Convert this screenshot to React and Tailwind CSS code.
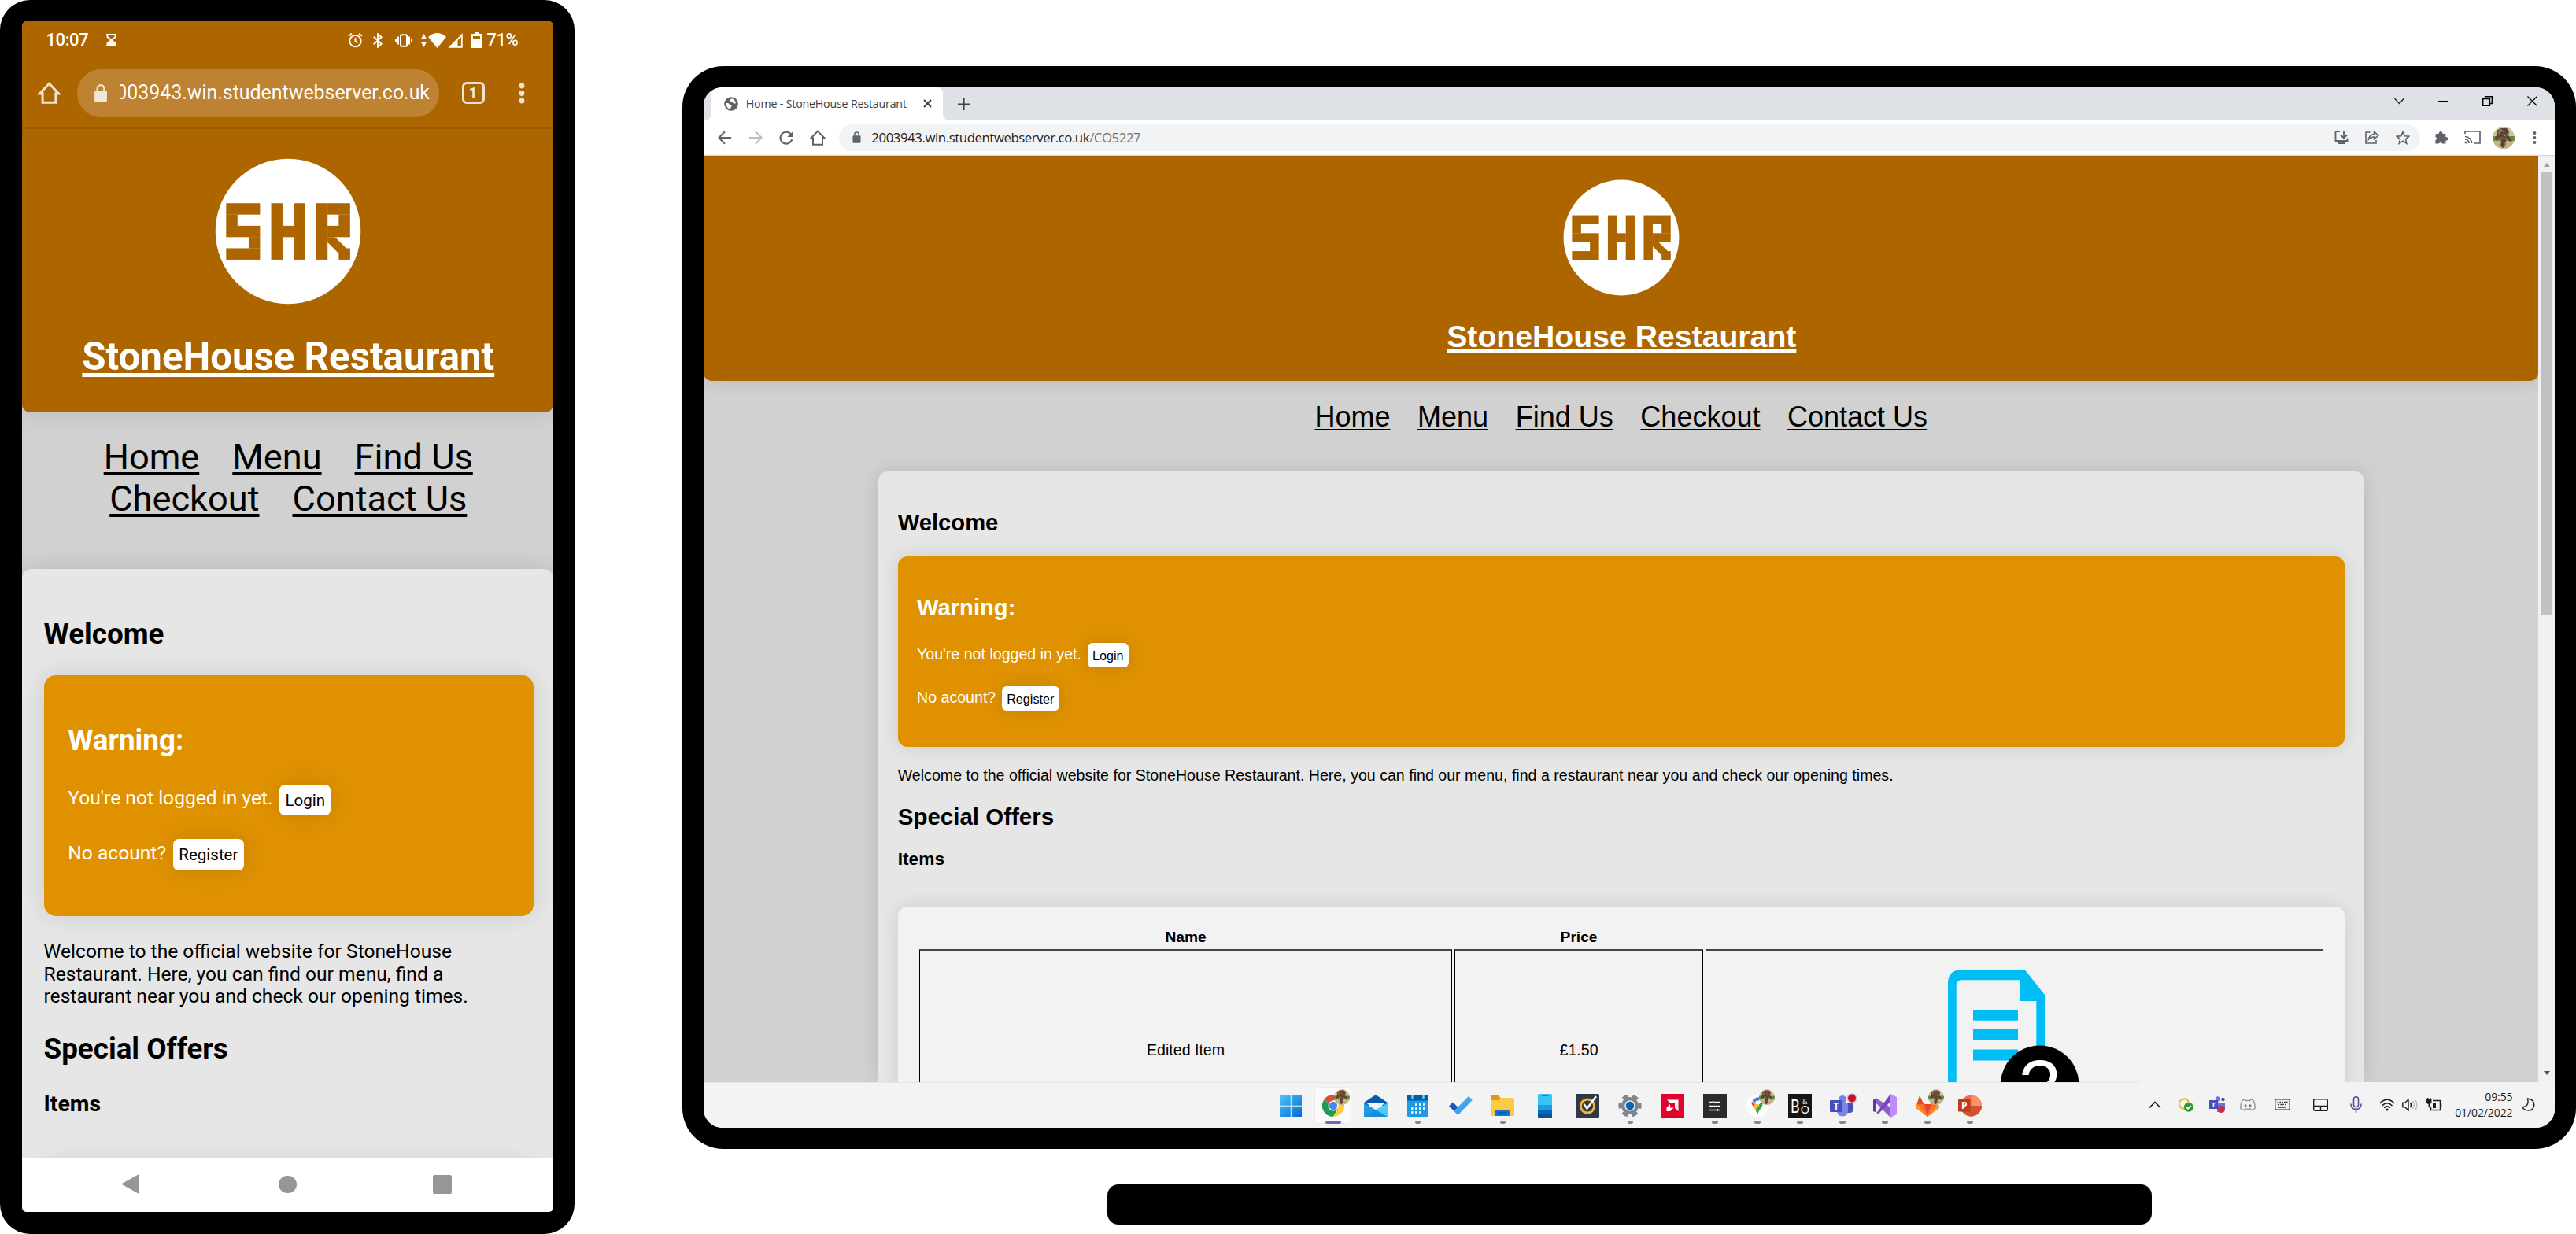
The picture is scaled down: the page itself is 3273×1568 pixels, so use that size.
import React from "react";

const BRAND = "#ad6500";

/* Block logo: a 13-unit circle with letters on a 5-unit high grid */
function Logo({ className }) {
  const blocks = [
    [0, 0, 3, 1], [0, 1, 1, 1], [0, 2, 3, 1], [2, 3, 1, 1], [0, 4, 3, 1],
    [4, 0, 1, 5], [6, 0, 1, 5], [5, 2, 1, 1],
    [8, 0, 1, 5], [9, 0, 2, 1], [10, 1, 1, 1], [9, 2, 2, 1], [10, 4, 1, 1],
  ];
  return (
    <svg className={className} viewBox="-1 -4 13 13" role="img" aria-label="SHR">
      <circle cx="5.5" cy="2.5" r="6.45" fill="#fff" />
      <clipPath id="leg"><rect x="9" y="3" width="2" height="2" /></clipPath>
      <g fill={BRAND} shapeRendering="geometricPrecision">
        {blocks.map(([x, y, w, h], i) => (
          <rect key={i} x={x} y={y} width={w + 0.01} height={h + 0.01} />
        ))}
        <line x1="9" y1="2.9" x2="10.9" y2="4.8" stroke={BRAND} strokeWidth="0.8" clipPath="url(#leg)" />
      </g>
    </svg>
  );
}

function Avatar({ className }) {
  return (
    <svg className={className} viewBox="0 0 28 28">
      <clipPath id="av"><circle cx="14" cy="14" r="14" /></clipPath>
      <g clipPath="url(#av)">
        <rect width="28" height="28" fill="#cfc295" />
        <rect y="12" width="28" height="7" fill="#5f8a3f" />
        <rect y="18" width="28" height="10" fill="#c6b184" />
        <path d="M5 5l6-3 7 0 3 4-1 5 5 7-3 1-4-5-1 4-1 6-3 3-3-3 1-6-2-4-5 3-1-3 3-4z" fill="#5a4438" />
        <path d="M7 8l3 3M12 5l3 2M18 9l2 3M11 13l2 3M15 20l1 3" stroke="#a8603c" strokeWidth="1.6" />
        <path d="M14 9l2 3M10 4l2 1M16 15l2 1M8 6l1 2" stroke="#a79c92" strokeWidth="1.4" />
      </g>
    </svg>
  );
}

function Svg({ className, vb = "0 0 20 20", children, ...p }) {
  return <svg className={"shrink-0 " + className} viewBox={vb} fill="none" {...p}>{children}</svg>;
}

const HomeIcon = ({ className, color, sw = 2 }) => (
  <Svg className={className} vb="0 0 20 20" stroke={color} strokeWidth={sw}>
    <path d="M4 18.8V10.6H1.4L10 1.6l8.6 9H16v8.2z" />
  </Svg>
);

const Lock = ({ className, color }) => (
  <Svg className={className} vb="0 0 12 16">
    <rect x="0.5" y="5.5" width="11" height="10.5" rx="1.4" fill={color} />
    <path d="M3 6V3.8a3 3 0 0 1 6 0V6" stroke={color} strokeWidth="1.6" />
  </Svg>
);

/* ---------------------------------------------------------------- phone */

function Phone() {
  return (
    <div className="h-[1568px] w-[730px] shrink-0 rounded-[38px] bg-black pl-[27.5px] pt-[27px] font-['Roboto',sans-serif]">
      <div className="flex h-[1513px] w-[675.5px] flex-col overflow-hidden rounded-[6px] bg-[#d1d1d1]">
        <div className="relative z-10 shrink-0 rounded-b-[10px] bg-[#ad6500] shadow-[0_0_30px_rgba(0,0,0,0.12)]">
          <div className="flex h-12 items-center text-[22px] font-medium leading-[26px] text-white">
            <span className="ml-[31px] w-[54px] whitespace-nowrap tracking-[-0.4px]">10:07</span>
            <Svg className="ml-[21px] h-4 w-[15px]" vb="0 0 15 16">
              <path d="M1 1h13M1 15h13M2.5 1.5v2.8L7.5 8l5-3.7V1.5M2.5 15v-3L7.5 8l5 4v3" stroke="#fff" strokeWidth="1.8" />
              <path d="M7.5 8l5 4v3h-10v-3z" fill="#fff" />
            </Svg>
            <Svg className="ml-[293px] h-5 w-[19px]" stroke="#fff" strokeWidth="2">
              <circle cx="10" cy="11.2" r="7.6" /><path d="M10 7v4.6l3 2M1 4.6L5 1.2M19 4.6l-4-3.4" />
            </Svg>
            <Svg className="ml-[12px] h-[19px] w-[14px]" vb="0 0 14 20" stroke="#fff" strokeWidth="1.9">
              <path d="M1.5 5l10.5 9.5-5 4.3V1.2l5 4.3L1.5 15" />
            </Svg>
            <Svg className="ml-[15px] h-[17px] w-[22px]" vb="0 0 22 17" stroke="#fff" strokeWidth="2">
              <rect x="7" y="1.3" width="8" height="14.4" rx="1" /><path d="M4 3.5v10M18 3.5v10M1 6v5M21 6v5" />
            </Svg>
            <Svg className="ml-[11px] h-[17px] w-[7px]" vb="0 0 7 17"><path d="M3.5 0L7 6.5H0zM3.5 17L7 10.5H0z" fill="#fff" /></Svg>
            <Svg className="ml-[2px] h-[19px] w-[23px]" vb="0 0 23 19"><path d="M0 5Q11.500 -5 23 5L11.500 19z" fill="#fff" /></Svg>
            <Svg className="ml-[2px] h-[19px] w-[19px]" vb="0 0 19 19">
              <path d="M17.800 2.500V17.800H2.500z" stroke="#fff" strokeWidth="1.8" /><path d="M12.500 7V18H1.500z" fill="#fff" />
            </Svg>
            <Svg className="ml-[11px] h-5 w-[13px]" vb="0 0 13 20">
              <path d="M4 0h5v2h4v18H0V2h4z" fill="#fff" /><path d="M2 5h9v3H2z" fill={BRAND} />
            </Svg>
            <span className="ml-[7px] whitespace-nowrap tracking-[-0.5px]">71%</span>
          </div>
          <div className="flex h-[88.500px] items-center border-b-2 border-[#9a5a00]">
            <HomeIcon className="ml-[20px] h-[28px] w-[29px] overflow-visible" color="#efe3d3" sw={2.2} />
            <div className="ml-[21.500px] flex h-[61.500px] w-[460px] items-center rounded-full bg-[#be8233]">
              <Lock className="ml-[21px] h-[23px] w-[18px]" color="#efe6dc" />
              <div className="ml-[16px] flex w-[393px] justify-end overflow-hidden whitespace-nowrap text-[24.900px] leading-[30px] text-white">
                2003943.win.studentwebserver.co.uk
              </div>
            </div>
            <div className="ml-[28.500px] flex h-[28px] w-[29px] items-center justify-center rounded-[6px] border-[3px] border-[#efe3d3] text-[18px] font-bold leading-none text-[#f4ecdf]">1</div>
            <Svg className="ml-[43px] h-[27px] w-[8px]" vb="0 0 8 27">
              <g fill="#efe3d3"><circle cx="4" cy="4" r="3.400" /><circle cx="4" cy="13.500" r="3.400" /><circle cx="4" cy="23" r="3.400" /></g>
            </Svg>
          </div>
          <div className="flex h-[360.500px] flex-col items-center pt-[37px] pl-[2px]">
            <Logo className="h-[186px] w-[186px] shrink-0" />
            <h1 className="mt-[38.500px] whitespace-nowrap text-[49.200px] font-bold leading-[57px] text-white underline decoration-[4.500px] underline-offset-[4px]">StoneHouse Restaurant</h1>
          </div>
        </div>
        <nav className="h-[199px] shrink-0 pt-[30.200px] pl-[2px] text-[45.200px] leading-[53px] text-black">
          <div className="flex justify-center gap-[42px] whitespace-nowrap decoration-[3.600px] underline-offset-[4px]">
            <a className="underline">Home</a><a className="underline">Menu</a><a className="underline">Find Us</a>
          </div>
          <div className="flex justify-center gap-[42px] whitespace-nowrap decoration-[3.600px] underline-offset-[4px]">
            <a className="underline">Checkout</a><a className="underline">Contact Us</a>
          </div>
        </nav>
        <main className="relative min-h-0 flex-1 overflow-visible rounded-t-[12px] bg-[#e6e6e6] pl-[28px] pr-[25px] pt-[61px] text-[24.620px] leading-[28.600px] text-black shadow-[0_0_30px_rgba(0,0,0,0.12)]">
          <h2 className="text-[36.800px] font-bold leading-[43px]">Welcome</h2>
          <section className="mt-[31.300px] h-[306px] rounded-[15px] bg-[#df9100] px-[30.700px] pt-[60.700px] text-white shadow-[0_0_30px_rgba(0,0,0,0.12)]">
            <h2 className="text-[36.800px] font-bold leading-[43px]">Warning:</h2>
            <div className="mt-[36.900px] flex h-[29px] items-start whitespace-nowrap leading-[29px]">
              <span className="w-[269px]">You're not logged in yet.</span>
              <button className="-mt-[2px] h-[39.500px] w-[65px] rounded-[7px] bg-white text-[20.500px] leading-[38px] text-black shadow-[0_0_30px_rgba(0,0,0,0.12)]">Login</button>
            </div>
            <div className="mt-[41.300px] flex h-[29px] items-start whitespace-nowrap leading-[29px]">
              <span className="w-[133.700px]">No acount?</span>
              <button className="-mt-[3px] h-[39.500px] w-[90px] rounded-[7px] bg-white text-[20.500px] leading-[38px] text-black shadow-[0_0_30px_rgba(0,0,0,0.12)]">Register</button>
            </div>
          </section>
          <p className="mt-[30.900px] whitespace-nowrap">
            Welcome to the official website for StoneHouse<br />
            Restaurant. Here, you can find our menu, find a<br />
            restaurant near you and check our opening times.
          </p>
          <h2 className="mt-[30.400px] text-[36.800px] font-bold leading-[43px]">Special Offers</h2>
          <h3 className="mt-[31.400px] text-[28.450px] font-bold leading-[33px]">Items</h3>
          <div className="mt-[60px] h-10 rounded-[15px] bg-[#f2f2f2] shadow-[0_0_30px_rgba(0,0,0,0.12)]" />
        </main>
        <div className="relative z-10 flex h-[69.500px] shrink-0 items-center bg-white pb-px">
          <Svg className="ml-[126px] h-[25px] w-[23px]" vb="0 0 23 25"><path d="M22.500 0v25L0 12.500z" fill="#969696" /></Svg>
          <div className="ml-[177.500px] h-[22.500px] w-[22.500px] rounded-full bg-[#969696]" />
          <div className="ml-[173px] h-[23.500px] w-[24px] rounded-[2px] bg-[#969696]" />
        </div>
      </div>
    </div>
  );
}

/* --------------------------------------------------------------- laptop */

function BrowserChrome() {
  const g = "#5f6368";
  return (
    <>
      <div className="flex h-[41.500px] shrink-0 items-stretch bg-[#dee1e6]">
        <div className="w-[9.500px] bg-white"><div className="h-full rounded-br-[8px] bg-[#dee1e6]" /></div>
        <div className="flex w-[294px] items-center rounded-t-[8px] bg-white">
          <Svg className="ml-[16px] h-[18px] w-[18px]" vb="0 0 20 20">
            <circle cx="10" cy="10" r="9.800" fill={g} />
            <path d="M2.800 9c2.200-.3 4 .2 4.800 1.600 1.700.4 3.300.9 3 2.700-.4 1.400-1.500 1.600-2 4.200-3.600-.8-6-4.400-5.800-8.500zM10.500 2.500c-1 1.300-2.500 1.400-2.300 3 .8 1.600 3.300.6 3.800 2.200.3 1.500 2.400 2 4.700 1.600-.2-3.500-3-6-6.200-6.800z" fill="#fff" />
          </Svg>
          <span className="ml-[10px] w-[214px] whitespace-nowrap font-['Open_Sans',sans-serif] text-[14.200px] leading-5 tracking-[-0.170px] text-[#3c4043]">Home - StoneHouse Restaurant</span>
          <Svg className="ml-[11px] h-[11px] w-[11px]" vb="0 0 11 11" stroke="#3c4043" strokeWidth="2"><path d="M1 1l9 9M10 1l-9 9" /></Svg>
        </div>
        <div className="w-[10px] bg-white"><div className="h-full rounded-bl-[8px] bg-[#dee1e6]" /></div>
        <Svg className="ml-[9.500px] mt-[13.500px] h-[15px] w-[15px]" vb="0 0 15 15" stroke="#3c4043" strokeWidth="2.200"><path d="M7.500 0v15M0 7.500h15" /></Svg>
        <div className="ml-auto flex items-start pt-[11px]">
          <Svg className="mt-[2px] h-[9px] w-[13px]" vb="0 0 13 9" stroke="#222" strokeWidth="1.300"><path d="M.5 1l6 6.500 6-6.500" /></Svg>
          <div className="ml-[43.500px] mt-[6px] h-[1.500px] w-[12px] bg-black" />
          <Svg className="ml-[44px] h-[13px] w-[13px]" vb="0 0 13 13" stroke="#000" strokeWidth="1.400"><path d="M.7 3.500h8.800v8.800H.7zM3.500 3.500V.7h8.800v8.800H9.500" /></Svg>
          <Svg className="ml-[43.500px] mr-[22px] h-[13px] w-[13px]" vb="0 0 13 13" stroke="#000" strokeWidth="1.200"><path d="M.5.500l12 12M12.500.500l-12 12" /></Svg>
        </div>
      </div>
      <div className="flex h-[45.500px] shrink-0 items-center border-b border-[#d0d4da] bg-white">
        <Svg className="ml-[18px] h-[18px] w-[18px]" stroke={g} strokeWidth="2.300"><path d="M19 10H2M10 1.500L1.500 10l8.500 8.500" /></Svg>
        <Svg className="ml-[21px] h-[18px] w-[18px]" stroke="#babcbe" strokeWidth="2.300"><path d="M1 10h17M10 1.500l8.500 8.500-8.500 8.500" /></Svg>
        <Svg className="ml-[21px] h-[18px] w-[18px]" stroke={g} strokeWidth="2.400"><path d="M18 12.500A8.300 8.300 0 1 1 16.500 5" /><path d="M19.500 1v8h-8z" fill={g} stroke="none" /></Svg>
        <HomeIcon className="ml-[21px] h-[20px] w-[20px]" color={g} />
        <div className="ml-[17px] flex h-[34.500px] w-[2009px] items-center rounded-full bg-[#f1f3f4]">
          <Lock className="ml-[17px] h-[15px] w-[11px]" color={g} />
          <span className="ml-[13px] whitespace-nowrap font-['Open_Sans',sans-serif] text-[16.800px] leading-6 tracking-[-0.430px] text-[#202124]">2003943.win.studentwebserver.co.uk<span className="text-[#6f7377]">/CO5227</span></span>
          <div className="ml-auto flex items-center pr-[13.500px]">
            <Svg className="h-[17px] w-[18px]" vb="0 0 18 17" stroke={g} strokeWidth="1.800"><path d="M7 1H1.500v12h15V9.500M12 0v9M8 5.500l4 4 4-4" /><path d="M4 13.500h10V17H4z" fill={g} stroke="none" /></Svg>
            <Svg className="ml-[21px] h-[17px] w-[18px]" vb="0 0 18 17" stroke={g} strokeWidth="1.600"><path d="M6.500 2H1v14h13v-4" /><path d="M4.500 11c.5-4 3-6 7-6.500V1.500L17 6l-5.500 4.500V8c-3 0-5 .8-7 3z" /></Svg>
            <Svg className="ml-[21px] h-[18px] w-[18px]" stroke={g} strokeWidth="1.800"><path d="M10 1.800l2.400 5.700 6.200.5-4.700 4 1.400 6L10 14.800 4.700 18l1.400-6-4.700-4 6.200-.5z" /></Svg>
          </div>
        </div>
        <Svg className="ml-[18px] h-[19px] w-[18px]" vb="0 0 20 20"><path d="M2 5h4.500a2.600 2.600 0 1 1 5 0H16v4.500a2.600 2.600 0 1 1 0 5V19h-4.800a2.500 2.500 0 0 0-4.800 0H1.500v-4.800a2.500 2.500 0 0 0 0-4.800z" fill={g} /></Svg>
        <Svg className="ml-[20px] h-[17px] w-[21px]" vb="0 0 21 17" stroke={g} strokeWidth="1.700"><path d="M1 4V1h19v15h-7M1 7.500A8.500 8.500 0 0 1 9.500 16M1 11a5 5 0 0 1 5 5" /><circle cx="2" cy="15" r="1.500" fill={g} stroke="none" /></Svg>
        <Avatar className="ml-[14.500px] h-[28px] w-[28px] shrink-0" />
        <Svg className="ml-[23px] h-[16px] w-[5px]" vb="0 0 5 16"><g fill={g}><circle cx="2.500" cy="2" r="1.900" /><circle cx="2.500" cy="8" r="1.900" /><circle cx="2.500" cy="14" r="1.900" /></g></Svg>
      </div>
    </>
  );
}

function DocIcon() {
  return (
    <Svg className="h-[168px] w-[168px]" vb="0 0 168 168">
      <path fillRule="evenodd" fill="#00bdf6" d="M16 0H97.500L123 32V168H0V16Q1 1 16 0zM16 13.300Q11 14 10.700 20V160H112.300V40H91.500V13.300z" />
      <path fill="#00bdf6" d="M32 51h57v13.700H32zM32 75.700h57V90H32zM32 101.400h57v14H32z" />
      <circle cx="116.700" cy="146.200" r="49.800" fill="#000" />
      <text x="116" y="180" textAnchor="middle" fontFamily="Liberation Sans, sans-serif" fontSize="92" fill="#fff">?</text>
    </Svg>
  );
}

function Site() {
  const link = "underline";
  return (
    <div className="flex min-h-0 flex-1 overflow-hidden">
      <div className="flex h-[1176.500px] w-[2331px] shrink-0 flex-col overflow-hidden bg-[#d1d1d1] font-['Liberation_Sans',Arial,sans-serif]">
        <header className="flex h-[286.300px] shrink-0 flex-col items-center rounded-b-[10px] bg-[#ad6500] pl-px pt-[30px] shadow-[0_0_24px_rgba(0,0,0,0.12)]">
          <Logo className="h-[148px] w-[148px] shrink-0" />
          <h1 className="mt-[29.500px] whitespace-nowrap text-[39.200px] font-bold leading-[44px] text-white underline decoration-[3.800px] underline-offset-[3px]">StoneHouse Restaurant</h1>
        </header>
        <nav className="flex h-[115px] shrink-0 justify-center gap-[34.600px] whitespace-nowrap pt-[24.400px] text-[36px] leading-[41px] text-black decoration-[2.400px] underline-offset-[3px]">
          <a className={link}>Home</a><a className={link}>Menu</a><a className={link}>Find Us</a><a className={link}>Checkout</a><a className={link}>Contact Us</a>
        </nav>
        <main className="mx-auto min-h-0 w-[1887.500px] flex-1 rounded-t-[12px] bg-[#e6e6e6] px-[24.700px] pt-[49px] text-[19.600px] leading-[22px] text-black shadow-[0_0_24px_rgba(0,0,0,0.12)]">
          <h2 className="text-[29.200px] font-bold leading-[33px]">Welcome</h2>
          <section className="mt-[25.500px] h-[242.700px] rounded-[12px] bg-[#df9100] px-[24.300px] pt-[48.900px] text-white shadow-[0_0_24px_rgba(0,0,0,0.12)]">
            <h2 className="text-[29.200px] font-bold leading-[33px]">Warning:</h2>
            <div className="mt-[31.500px] flex h-[22px] items-start whitespace-nowrap">
              <span className="w-[217px]">You're not logged in yet.</span>
              <button className="-mt-[3.300px] h-[31px] w-[51.500px] rounded-[6px] bg-white text-[16.200px] leading-[32px] text-black shadow-[0_0_24px_rgba(0,0,0,0.12)]">Login</button>
            </div>
            <div className="mt-[33px] flex h-[22px] items-start whitespace-nowrap">
              <span className="w-[108px]">No acount?</span>
              <button className="-mt-[3px] h-[31px] w-[72.500px] rounded-[6px] bg-white text-[16.200px] leading-[32px] text-black shadow-[0_0_24px_rgba(0,0,0,0.12)]">Register</button>
            </div>
          </section>
          <p className="mt-[24.100px] whitespace-nowrap">Welcome to the official website for StoneHouse Restaurant. Here, you can find our menu, find a restaurant near you and check our opening times.</p>
          <h2 className="mt-[25.100px] text-[29.500px] font-bold leading-[33px]">Special Offers</h2>
          <h3 className="mt-[24.300px] text-[22.700px] font-bold leading-[26px]">Items</h3>
          <div className="mt-[48.400px] h-[400px] rounded-[12px] bg-[#f2f2f2] px-[27px] pt-[27.700px] text-center shadow-[0_0_24px_rgba(0,0,0,0.12)]">
            <div className="flex gap-[2.600px] text-[19.200px] font-bold">
              <div className="w-[677.600px]">Name</div><div className="w-[316.300px]">Price</div>
            </div>
            <div className="mt-[3.800px] flex h-[300px] gap-[2.600px]">
              <div className="w-[677.600px] border border-t-2 border-black border-t-[#444] pt-[115px]">Edited Item</div>
              <div className="w-[316.300px] border border-t-2 border-black border-t-[#444] pt-[115px]">£1.50</div>
              <div className="w-[785px] border border-t-2 border-black border-t-[#444] pl-[307.500px] pt-[24px]"><DocIcon /></div>
            </div>
          </div>
        </main>
      </div>
      <div className="flex flex-1 flex-col items-center bg-[#f1f1f1]">
        <div className="mt-[8.500px] border-x-[4.500px] border-b-[5px] border-x-transparent border-b-[#a3a3a3]" />
        <div className="mt-[7.500px] h-[562px] w-[15.500px] bg-[#c1c1c1]" />
        <div className="mb-[8.500px] mt-auto border-x-[4.500px] border-t-[5px] border-x-transparent border-t-[#505050]" />
      </div>
    </div>
  );
}

const appIcons = [
  { n: "start", el: (
    <Svg className="h-[28.500px] w-[28.500px]" vb="0 0 28 28">
      <defs><linearGradient id="w" x2="1" y2="1"><stop stopColor="#4cc8fb" /><stop offset="1" stopColor="#0268cf" /></linearGradient></defs>
      <path d="M0 1q0-1 1-1h12.500v13.500H0zM14.500 0H27q1 0 1 1v12.500H14.500zM0 14.500h13.500V28H1q-1 0-1-1zM14.500 14.500H28V27q0 1-1 1H14.500z" fill="url(#w)" />
    </Svg>) },
  { n: "chrome", active: true, av: true, el: (
    <Svg className="h-[28px] w-[28px]" vb="0 0 48 48">
      <path d="M24 24L3.200 12A24 24 0 0 1 44.800 12z" fill="#d94f43" />
      <path d="M24 24L3.200 12A24 24 0 0 0 24 48L34.400 30z" fill="#1d9a56" />
      <path d="M24 24l10.400 6L24 48A24 24 0 0 0 44.800 12H24z" fill="#fbcd42" />
      <circle cx="24" cy="24" r="11" fill="#fff" /><circle cx="24" cy="24" r="8.800" fill="#4a87ee" />
    </Svg>) },
  { n: "mail", el: (
    <Svg className="h-[28px] w-[30px]" vb="0 0 30 28">
      <path d="M0 10L15 0l15 10v4H0z" fill="#0a5bb0" /><path d="M2.500 10h25L15 20z" fill="#f4f4f6" />
      <path d="M0 10.500L30 28H0z" fill="#1f9be6" /><path d="M30 10.500V28L15 19z" fill="#49cdf8" /><path d="M0 28L15 19l15 9z" fill="#1c8ddb" />
    </Svg>) },
  { n: "calendar", dot: true, el: (
    <Svg className="h-[28px] w-[27px]" vb="0 0 27 28">
      <rect width="27" height="28" rx="1.500" fill="#1f9be6" /><path d="M0 1h27v6.500H0z" fill="#0c59a4" />
      <path d="M6.500 0v6M20.500 0v6" stroke="#50d2fa" strokeWidth="2.500" />
      <path d="M10 12.500h12.500M5 17.500h17.500M5 22.500h12.500" stroke="#fff" strokeWidth="2.600" strokeDasharray="2.600 2.400" />
    </Svg>) },
  { n: "todo", el: (
    <Svg className="h-[24px] w-[30px]" vb="0 0 30 24"><path d="M0 12.500l5-5 7 7-.5 9z" fill="#1c57b8" /><path d="M6.500 18.500L25 0l4.800 4.800L11.500 24z" fill="#41a4ee" /></Svg>) },
  { n: "explorer", dot: true, el: (
    <Svg className="h-[27px] w-[30px]" vb="0 0 30 27">
      <path d="M0 1.500Q0 0 1.500 0H10l3 3.500V8H0z" fill="#dc9c0a" /><path d="M0 6h10l3-3h15.500q1.500 0 1.500 1.500V26H0z" fill="#fccb45" />
      <path d="M5 26v-5q0-3 3-3h13q3 0 3 3v5z" fill="#1374c9" /><path d="M9 22h11" stroke="#0b559b" strokeWidth="1.500" />
    </Svg>) },
  { n: "phone", el: (
    <Svg className="h-[30px] w-[18px]" vb="0 0 18 30">
      <rect width="18" height="30" rx="1.500" fill="#39c3f5" /><path d="M0 14h18v7H0z" fill="#1d9be4" /><path d="M0 21h18v4.500H0z" fill="#0668bd" /><path d="M0 25.500h18V29q0 1-1 1H1q-1 0-1-1z" fill="#0b4f99" />
      <path d="M5 2h8" stroke="#0b5fa6" strokeWidth="1.300" />
    </Svg>) },
  { n: "shield", el: (
    <Svg className="h-[30px] w-[30px]" vb="0 0 30 30">
      <rect width="30" height="30" rx="1.500" fill="#2f3a46" /><circle cx="15" cy="15.500" r="8.600" stroke="#f7b52c" strokeWidth="3" />
      <path d="M10.500 13l4 5.500L26 3" stroke="#f5f5f5" strokeWidth="2.600" />
    </Svg>) },
  { n: "settings", dot: true, el: (
    <Svg className="h-[30px] w-[30px]" vb="0 0 30 30">
      <circle cx="15" cy="15" r="11" fill="#7e868d" />
      <circle cx="15" cy="15" r="12.600" stroke="#7e868d" strokeWidth="4" strokeDasharray="7.200 5.990" strokeDashoffset="3.600" />
      <circle cx="15" cy="15" r="6.800" fill="#dfe8ef" /><circle cx="15" cy="15" r="5.200" fill="#0f62b5" />
    </Svg>) },
  { n: "amd", el: (
    <Svg className="h-[30px] w-[30px]" vb="0 0 30 30">
      <rect width="30" height="30" fill="#e0032e" /><path d="M8 7.500h14.500V22L18 17.700v-5.700h-5.700z" fill="#fff" /><path d="M12 13l-4.500 4.500V22H12l4.500-4.500H12z" fill="#fff" />
    </Svg>) },
  { n: "mixer", dot: true, el: (
    <Svg className="h-[30px] w-[30px]" vb="0 0 30 30"><rect width="30" height="30" fill="#2b2b2b" /><path d="M8 10.500h3M12.500 10.500h9.500M8 15.500h9M18.500 15.500H22M8 20.500h9.500M19 20.500h3" stroke="#fff" strokeWidth="1.600" /><path d="M12 9v3M17.800 14v3M18.200 19v3" stroke="#fff" strokeWidth="1.200" /></Svg>) },
  { n: "maps", dot: true, av: true, el: (
    <Svg className="h-[28px] w-[28px]" vb="0 0 28 28">
      <circle cx="14" cy="14" r="14" fill="#fff" />
      <path d="M14 25l-3-7L20 8q1.500 3 0 6.500-1.500 3-4 6z" fill="#2fa653" /><path d="M8.500 15l4-5 4 3.500-5 6z" fill="#fbbc1d" /><path d="M6.700 8.500L11 12l-2.700 3Q6 11 6.700 8.500z" fill="#e34b3c" /><path d="M9 5.500L14 3l4 1.500-6 7-4.500-3.500z" fill="#3d7fe8" /><circle cx="13.500" cy="9.800" r="2.200" fill="#fff" />
    </Svg>) },
  { n: "bo", dot: true, el: (
    <div className="flex h-[30px] w-[30px] items-center justify-center gap-px bg-[#161616] font-['Lato',sans-serif] text-white">
      <span className="scale-y-125 text-[18px] leading-[22px]">B</span>
      <span className="flex flex-col items-center leading-[10px]"><span className="text-[9px] leading-[9px]">&amp;</span><span className="text-[14px] leading-[12px]">O</span></span>
    </div>) },
  { n: "teams", dot: true, el: (
    <div className="relative h-[30px] w-[32px]">
      <Svg className="h-[30px] w-[32px] overflow-visible" vb="0 0 32 30">
        <circle cx="16" cy="7" r="5" fill="#7b83eb" /><path d="M20 11h10v7q0 6-5 6h-5z" fill="#4650b8" /><path d="M9 12h14v9q0 7.500-7 7.500T9 21z" fill="#7b83eb" />
        <rect x="0" y="8" width="16" height="15" rx="1" fill="#4650bd" />
        <circle cx="28" cy="5.500" r="6.600" fill="#c9c9c9" /><circle cx="28" cy="5.500" r="5" fill="#cb0b2b" />
      </Svg>
      <span className="absolute left-0 top-[8px] w-4 text-center font-['Open_Sans',sans-serif] text-[12px] font-bold leading-[15px] text-white">T</span>
    </div>) },
  { n: "vs", dot: true, el: (
    <Svg className="h-[30px] w-[30px]" vb="0 0 30 30">
      <path d="M0 8l4-2.500L30 22l-8 8z" fill="#8b5fd0" /><path d="M0 8l4-2.500v18L0 22z" fill="#5f3a9e" /><path d="M4 24.500L22 0v10L7 25z" fill="#7748b8" /><path d="M22 0l8 4v22l-8 4z" fill="#c08cf7" />
    </Svg>) },
  { n: "gitlab", dot: true, av: true, el: (
    <Svg className="h-[27px] w-[30px]" vb="0 0 30 27">
      <path d="M5 0l5.500 11h9L25 0l5 15.500L15 27 0 15.500z" fill="#e2462b" /><path d="M10.500 11h9L15 27z" fill="#e2462b" /><path d="M0 15.500L1.800 11h8.700L15 27z" fill="#fc9a2a" /><path d="M30 15.500L28.200 11h-8.700L15 27z" fill="#fc9a2a" /><path d="M1.800 11h8.700L15 27zM28.200 11h-8.700L15 27z" fill="#fb6d2a" />
    </Svg>) },
  { n: "ppt", dot: true, el: (
    <div className="relative h-[28px] w-[30px]">
      <Svg className="h-[28px] w-[30px]" vb="0 0 30 28">
        <circle cx="16.500" cy="14" r="13.500" fill="#ed6c47" /><path d="M16.500.500A13.500 13.500 0 0 1 30 14H16.500z" fill="#ff8f6b" /><path d="M30 14a13.500 13.500 0 0 1-27 0z" fill="#d35230" />
        <rect x="0" y="6" width="15.500" height="15.500" rx="1" fill="#c13b1b" />
      </Svg>
      <span className="absolute left-0 top-[6px] w-4 text-center font-['Open_Sans',sans-serif] text-[12px] font-bold leading-[15px] text-white">P</span>
    </div>) },
];

function Taskbar() {
  const k = "#1c1c1c";
  return (
    <div className="flex h-[58.800px] shrink-0 items-center bg-[#f3f3f3]">
      <div className="flex h-full w-[1823.500px] shrink-0 items-start border-t border-[#e4e4e4] pl-[718.500px] pt-[5.500px]">
        {appIcons.map((a) => (
          <div key={a.n} className="relative flex h-[48px] w-[53.940px] shrink-0 items-center justify-center">
            {a.active && <div className="absolute left-[3.500px] top-0 h-[47px] w-[47px] rounded-[5px] border border-[#ebebeb] bg-[#fafafa]" />}
            <div className="relative">{a.el}</div>
            {a.av && <Avatar className="absolute left-[28.500px] top-[2.500px] h-[20px] w-[20px]" />}
            {a.active && <div className="absolute bottom-[1px] h-[4px] w-[20px] rounded-full bg-[#7462c6]" />}
            {a.dot && <div className="absolute bottom-[1px] h-[4px] w-[7.500px] rounded-full bg-[#868686]" />}
          </div>
        ))}
      </div>
      <Svg className="ml-[12px] h-[9px] w-[16px]" vb="0 0 16 9" stroke={k} strokeWidth="1.600"><path d="M1 8.500l7-7 7 7" /></Svg>
      <Svg className="ml-[22.500px] h-[19px] w-[19px]" stroke="#fbb829" strokeWidth="2.600"><path d="M8 15.500A6.500 6.500 0 1 1 13.500 7" /><circle cx="13.500" cy="13.500" r="6.300" fill="#2f9a35" stroke="none" /><path d="M10.500 13.500l2.200 2.200 4-4" stroke="#fff" strokeWidth="1.800" /></Svg>
      <div className="relative ml-[19.500px] h-[21px] w-[20px]">
        <Svg className="h-[21px] w-[20px]" vb="0 0 20 21"><circle cx="11" cy="3.500" r="3.200" fill="#6b74dc" /><circle cx="17.500" cy="4" r="2.300" fill="#4650bd" /><path d="M10 8h10v8q-2 4-6 4h-4z" fill="#6b74dc" /><rect y="5" width="11" height="11" fill="#4650bd" /><circle cx="15.500" cy="16.500" r="4.500" fill="#c4314b" /></Svg>
        <span className="absolute left-0 top-[5px] w-[11px] text-center font-['Open_Sans',sans-serif] text-[9px] font-bold leading-[11px] text-white">T</span>
      </div>
      <Svg className="ml-[19.500px] h-[16px] w-[20px]" vb="0 0 20 16" stroke="#8f8f8f" strokeWidth="1.300"><path d="M6.500 1.200Q3.800 1.500 2.600 3 .6 7.500.8 12.300 3 14.500 5.500 14.800l1-2q3.500.8 7 0l1 2q2.500-.3 4.700-2.500.2-4.800-1.800-9.300-1.200-1.500-3.900-1.800l-.8 1.500q-2.700-.5-5.400 0z" /><circle cx="7" cy="8.700" r="1.500" fill="#777" stroke="none" /><circle cx="13" cy="8.700" r="1.500" fill="#777" stroke="none" /></Svg>
      <Svg className="ml-[24px] h-[15px] w-[20px]" vb="0 0 20 15" stroke={k} strokeWidth="1.400"><rect x=".7" y=".7" width="18.600" height="13.600" rx="1.500" /><path d="M3.500 4.500h13M4.500 7.500h11" strokeDasharray="1.500 1.400" /><path d="M5 11h10" /></Svg>
      <Svg className="ml-[29px] h-[16px] w-[19px]" vb="0 0 19 16" stroke={k} strokeWidth="1.400"><rect x=".7" y=".7" width="17.600" height="14.600" rx="1.500" /><path d="M.7 9.500h17.600M9.500 9.500V15" /></Svg>
      <Svg className="ml-[28px] h-[21px] w-[15px]" vb="0 0 15 21" stroke="#5a4fa0" strokeWidth="1.600"><rect x="4.500" y=".8" width="6" height="13" rx="3" /><path d="M1 9.500q0 7 6.500 7t6.500-7M7.500 16.500V21" /></Svg>
      <Svg className="ml-[22px] h-[16px] w-[20px]" vb="0 0 20 16" stroke={k} strokeWidth="1.500"><path d="M.7 6Q10-3.500 19.300 6M3.500 9Q10 2.500 16.500 9M6.200 11.700Q10 8 13.800 11.700" /><circle cx="10" cy="14" r="1.600" fill={k} stroke="none" /></Svg>
      <Svg className="ml-[9px] h-[16px] w-[20px]" vb="0 0 20 16" stroke={k} strokeWidth="1.400"><path d="M.8 5.200h3L8 1v14l-4.200-4.200h-3z" /><path d="M10.500 5q2 3 0 6" /><path d="M13.500 3q3.500 5 0 10M16.500 1.200q5 6.800 0 13.600" stroke="#bdbdbd" /></Svg>
      <Svg className="ml-[10.500px] h-[17px] w-[20px]" vb="0 0 20 17" stroke={k} strokeWidth="1.500"><path d="M8 3.500h9.500v12H5.500V11M18.500 7.500v4" /><path d="M0 2h6.500v3.500q-.5 2.500-3.300 2.500T0 5.500zM1 0h1.400v2H1zM4.200 0h1.400v2H4.200zM8 6h4v7H8z" fill={k} stroke="none" /><path d="M3.300 8v3.500h2" /></Svg>
      <div className="ml-auto flex flex-col items-end whitespace-nowrap font-['Open_Sans',sans-serif] text-[14px] leading-[19.700px] tracking-[-0.100px] text-[#1c1c1c]">
        <span>09:55</span><span>01/02/2022</span>
      </div>
      <Svg className="ml-[12px] mr-[24.500px] h-[17px] w-[17px]" vb="0 0 17 17" stroke={k} strokeWidth="1.400"><path d="M7.500 1q8.500 1 8.300 8.200Q15 16 8.500 16 3.500 16 1 12q9-1.500 6.500-11z" /></Svg>
    </div>
  );
}

function Laptop() {
  return (
    <div className="ml-[137.300px] mt-[84px] flex w-[2405.500px] shrink-0 flex-col items-start">
      <div className="h-[1376px] w-full rounded-[52px] bg-black pl-[27px] pt-[27px]">
        <div className="flex h-[1322.300px] w-[2351.700px] flex-col overflow-hidden rounded-[24px] bg-white">
          <BrowserChrome />
          <Site />
          <Taskbar />
        </div>
      </div>
      <div className="ml-[540px] mt-[45.300px] h-[50.400px] w-[1326.500px] rounded-[14px] bg-black" />
    </div>
  );
}

export default function App() {
  return (
    <div className="flex h-[1568px] w-[3273px] items-start overflow-hidden bg-white">
      <Phone />
      <Laptop />
    </div>
  );
}
